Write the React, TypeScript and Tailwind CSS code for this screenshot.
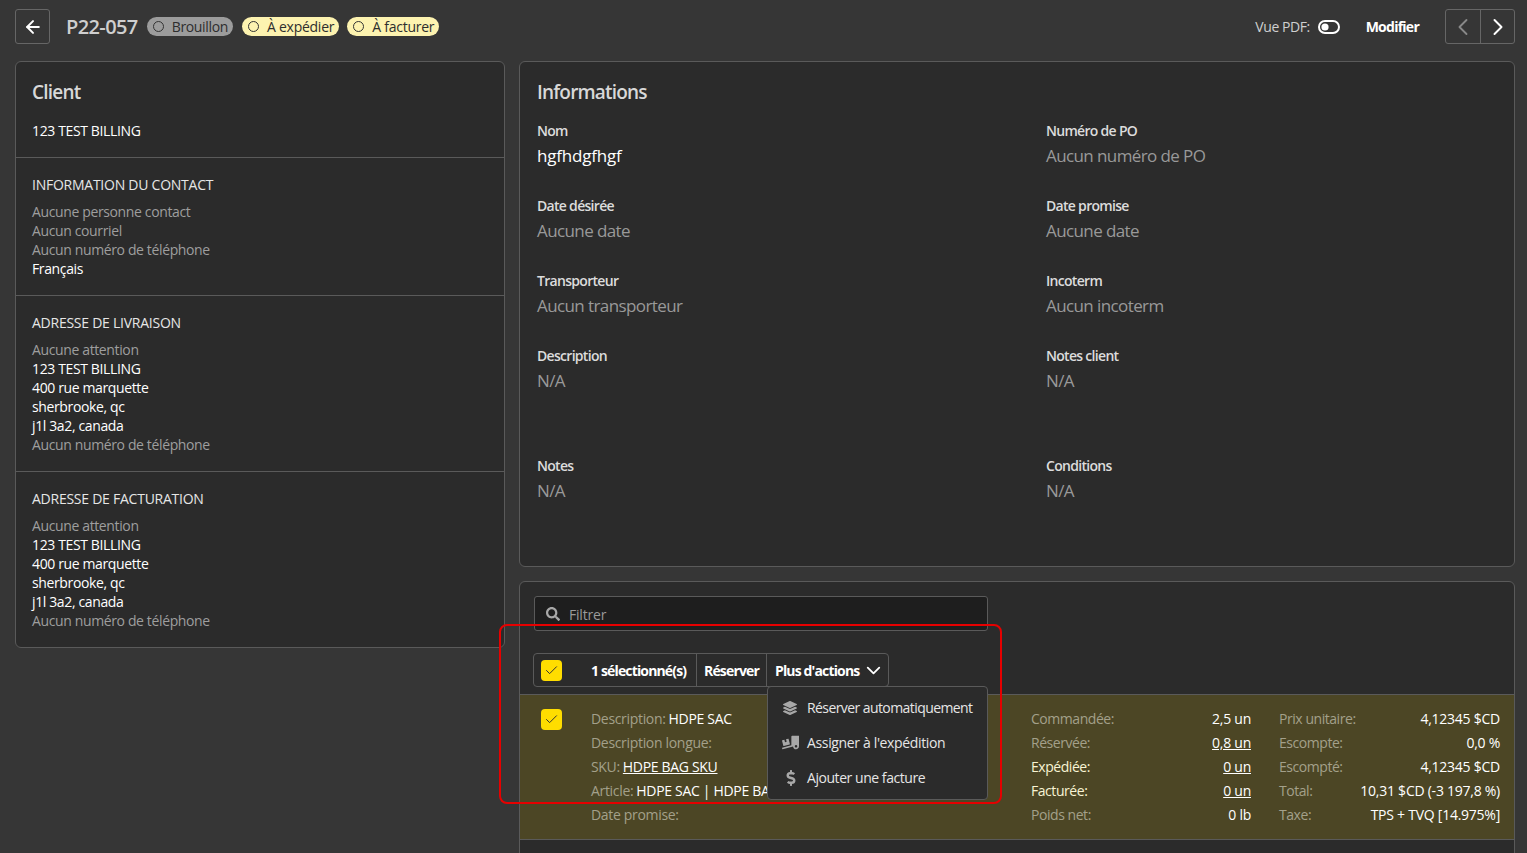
import React from "react";
import { ArrowLeft, ChevronLeft, ChevronRight, ChevronDown, Check } from "lucide-react";
import { FaLayerGroup, FaDollarSign, FaTruckLoading, FaSearch } from "react-icons/fa";

const font = { fontFamily: '"Open Sans", "Noto Sans", sans-serif' };

function Badge({ label, tone }: { label: string; tone: "grey" | "yellow" }) {
  return (
    <span className={`flex h-[19px] items-center gap-[8px] rounded-full pl-[6px] pr-[5px] text-[14px] text-[#2e2e2e] ${tone === "grey" ? "mr-px bg-[#9c9c9c] tracking-[-0.35px]" : "bg-[#fdf3b0] tracking-[-0.25px]"}`}>
      <span className="h-[11px] w-[11px] rounded-full border border-[#333]" />
      {label}
    </span>
  );
}

function Section({ title, lines }: { title: string; lines: [string, boolean][] }) {
  return (
    <div className="border-t border-[#5a5a5a] px-4 pb-[17px] pt-[17px]">
      <div className="text-[14px] leading-[19px] tracking-[-0.25px] text-[#e6e6e6]">{title}</div>
      <div className="mt-[8px] text-[14px] leading-[19px] tracking-[-0.37px]">
        {lines.map(([t, on], i) => (
          <div key={i} className={on ? "text-white" : "text-[#9e9e9e]"}>{t}</div>
        ))}
      </div>
    </div>
  );
}

function Field({ label, value, on, h = "h-[75px]" }: { label: string; value: string; on?: boolean; h?: string }) {
  return (
    <div className={h}>
      <div className="text-[14px] font-semibold leading-[19px] tracking-[-0.7px] text-[#dcdcdc]">{label}</div>
      <div className={`mt-[4px] text-[17px] leading-[24px] ${on ? "tracking-[-0.2px] text-white" : "tracking-[-0.6px] text-[#999999]"}`}>{value}</div>
    </div>
  );
}

function Pair({ k, v, strong, link }: { k: string; v: string; strong?: boolean; link?: boolean }) {
  return (
    <div className="flex h-[24px] items-center justify-between whitespace-nowrap">
      <span className={`tracking-[-0.45px] ${strong ? "text-[#f8f4d4]" : "text-[#a3a08a]"}`}>{k}</span>
      <span className={`text-white ${link ? "underline" : ""}`}>{v}</span>
    </div>
  );
}

function Check2({ className = "" }: { className?: string }) {
  return (
    <span className={`flex h-[21px] w-[21px] shrink-0 items-center justify-center rounded-[4px] bg-[#ffdd00] ${className}`}>
      <Check size={15} strokeWidth={1.6} className="text-[#333]" />
    </span>
  );
}

export default function App() {
  return (
    <div style={font} className="relative h-[853px] w-[1527px] overflow-hidden bg-[#363636] text-white">
      <header className="flex h-[61px] items-start pl-[15px] pr-[12px] pt-[9px]">
        <button className="flex h-[35px] w-[35px] items-center justify-center rounded-[3px] border border-[#666]">
          <ArrowLeft size={20} strokeWidth={2.4} />
        </button>
        <h1 className="ml-[16px] mt-[3px] text-[20px] font-semibold leading-[30px] tracking-[-0.6px] text-[#cfcfcf]">P22-057</h1>
        <div className="ml-[9px] mt-[8px] flex gap-[8px]">
          <Badge label="Brouillon" tone="grey" />
          <Badge label="À expédier" tone="yellow" />
          <Badge label="À facturer" tone="yellow" />
        </div>
        <div className="ml-auto flex items-center">
          <span className="text-[14px] font-medium tracking-[-0.45px] text-[#cfcfcf]">Vue PDF:</span>
          <svg width="22" height="14" viewBox="0 0 22 14" className="ml-[8px]">
            <rect x="1" y="1" width="20" height="12" rx="6" fill="none" stroke="white" strokeWidth="2" />
            <circle cx="7" cy="7" r="3.6" fill="white" />
          </svg>
          <span className="ml-[26px] text-[14px] font-bold tracking-[-0.75px]">Modifier</span>
          <div className="ml-[26px] flex h-[35px] rounded-[3px] border border-[#666]">
            <span className="flex w-[35px] items-center justify-center border-r border-[#666] text-[#888]"><ChevronLeft size={28} strokeWidth={1.6} /></span>
            <span className="flex w-[33px] items-center justify-center"><ChevronRight size={28} strokeWidth={1.7} /></span>
          </div>
        </div>
      </header>

      <div className="flex items-start gap-[14px] pl-[15px] pr-[12px]">
        <aside className="w-[490px] shrink-0 rounded-[6px] border border-[#5a5a5a] bg-[#2b2b2b]">
          <div className="h-[95px] px-4 pt-[15px]">
            <h2 className="text-[19px] font-semibold leading-[30px] tracking-[-0.8px] text-[#d8d8d8]">Client</h2>
            <div className="mt-[14px] text-[14px] leading-[19px] tracking-[-0.37px]">123 TEST BILLING</div>
          </div>
          <Section title="INFORMATION DU CONTACT" lines={[["Aucune personne contact", false], ["Aucun courriel", false], ["Aucun numéro de téléphone", false], ["Français", true]]} />
          <Section title="ADRESSE DE LIVRAISON" lines={[["Aucune attention", false], ["123 TEST BILLING", true], ["400 rue marquette", true], ["sherbrooke, qc", true], ["j1l 3a2, canada", true], ["Aucun numéro de téléphone", false]]} />
          <Section title="ADRESSE DE FACTURATION" lines={[["Aucune attention", false], ["123 TEST BILLING", true], ["400 rue marquette", true], ["sherbrooke, qc", true], ["j1l 3a2, canada", true], ["Aucun numéro de téléphone", false]]} />
        </aside>

        <main className="flex w-[996px] shrink-0 flex-col gap-[14px]">
          <section className="h-[506px] rounded-[6px] border border-[#5a5a5a] bg-[#2b2b2b] px-[17px] pt-[15px]">
            <h2 className="text-[19px] font-semibold leading-[30px] tracking-[-0.8px] text-[#d8d8d8]">Informations</h2>
            <div className="mt-[14px] grid grid-cols-[509px_1fr]">
              <Field label="Nom" value="hgfhdgfhgf" on />
              <Field label="Numéro de PO" value="Aucun numéro de PO" />
              <Field label="Date désirée" value="Aucune date" />
              <Field label="Date promise" value="Aucune date" />
              <Field label="Transporteur" value="Aucun transporteur" />
              <Field label="Incoterm" value="Aucun incoterm" />
              <Field label="Description" value="N/A" h="h-[110px]" />
              <Field label="Notes client" value="N/A" h="h-[110px]" />
              <Field label="Notes" value="N/A" />
              <Field label="Conditions" value="N/A" />
            </div>
          </section>

          <section className="relative h-[300px] rounded-t-[6px] border border-[#5a5a5a] bg-[#2b2b2b]">
            <div className="px-[14px] pt-[14px]">
              <div className="flex h-[35px] w-[454px] items-center rounded-[3px] border border-[#5a5a5a] bg-[#1e1e1e] pl-[11px] text-[14px] text-[#9a9a9a]">
                <FaSearch size={14} className="text-[#a8a8a8]" />
                <span className="ml-[9px] mt-[1px] tracking-[-0.2px]">Filtrer</span>
              </div>
              <div className="mt-[22px] flex h-[34px] w-[356px] -translate-x-px items-stretch rounded-[4px] border border-[#5a5a5a] text-[14px] font-bold tracking-[-0.85px]">
                <div className="flex w-[163px] items-center border-r border-[#5a5a5a] pl-[7px]">
                  <Check2 />
                  <span className="ml-[29px]">1 sélectionné(s)</span>
                </div>
                <div className="flex w-[70px] items-center justify-center border-r border-[#5a5a5a]">Réserver</div>
                <div className="flex flex-1 items-center pl-[8px]">
                  Plus d'actions
                  <ChevronDown size={23} strokeWidth={1.9} className="ml-[3px]" />
                </div>
              </div>
            </div>

            <div className="mt-[7px] flex h-[146px] border-y border-[#5a5a5a] bg-[#4c4625] pl-[21px] pr-[14px] pt-[11px] text-[14px] tracking-[-0.25px]">
              <Check2 className="mt-[3px]" />
              <div className="ml-[29px] flex-1 tracking-[-0.32px] text-[#a3a08a]">
                <div className="flex h-[24px] items-center gap-[3px]">Description: <span className="text-white">HDPE SAC</span></div>
                <div className="flex h-[24px] items-center">Description longue:</div>
                <div className="flex h-[24px] items-center gap-[3px]">SKU: <span className="text-white underline">HDPE BAG SKU</span></div>
                <div className="flex h-[24px] items-center gap-[3px]">Article: <span className="text-white">HDPE SAC | HDPE BAG</span></div>
                <div className="flex h-[24px] items-center">Date promise:</div>
              </div>
              <div className="w-[220px]">
                <Pair k="Commandée:" v="2,5 un" />
                <Pair k="Réservée:" v="0,8 un" link />
                <Pair k="Expédiée:" v="0 un" link strong />
                <Pair k="Facturée:" v="0 un" link strong />
                <Pair k="Poids net:" v="0 lb" />
              </div>
              <div className="ml-[28px] w-[221px]">
                <Pair k="Prix unitaire:" v="4,12345 $CD" />
                <Pair k="Escompte:" v="0,0 %" />
                <Pair k="Escompté:" v="4,12345 $CD" />
                <Pair k="Total:" v="10,31 $CD (-3 197,8 %)" />
                <Pair k="Taxe:" v="TPS + TVQ [14.975%]" />
              </div>
            </div>

            <div className="absolute left-[247px] top-[104px] w-[221px] rounded-[4px] border border-[#5a5a5a] bg-[#2b2b2b] pb-[4px] pt-[3px] text-[14px] text-[#e6e6e6]">
              <div className="flex h-[35px] items-center">
                <span className="flex w-[39px] justify-end pr-[10px]"><FaLayerGroup size={14} className="text-[#a8a8a8]" /></span>
                <span className="tracking-[-0.58px]">Réserver automatiquement</span>
              </div>
              <div className="flex h-[35px] items-center">
                <span className="flex w-[39px] justify-end pr-[8px]"><FaTruckLoading size={17} className="text-[#a8a8a8]" /></span>
                <span className="tracking-[-0.35px]">Assigner à l'expédition</span>
              </div>
              <div className="flex h-[35px] items-center">
                <span className="flex w-[39px] justify-end pr-[8px]"><FaDollarSign size={16} className="text-[#a8a8a8]" /></span>
                <span className="tracking-[-0.45px]">Ajouter une facture</span>
              </div>
            </div>
          </section>
        </main>
      </div>

      <div className="pointer-events-none absolute left-[499px] top-[624px] h-[180px] w-[503px] rounded-[8px] border-2 border-[#e60000]" />
    </div>
  );
}
